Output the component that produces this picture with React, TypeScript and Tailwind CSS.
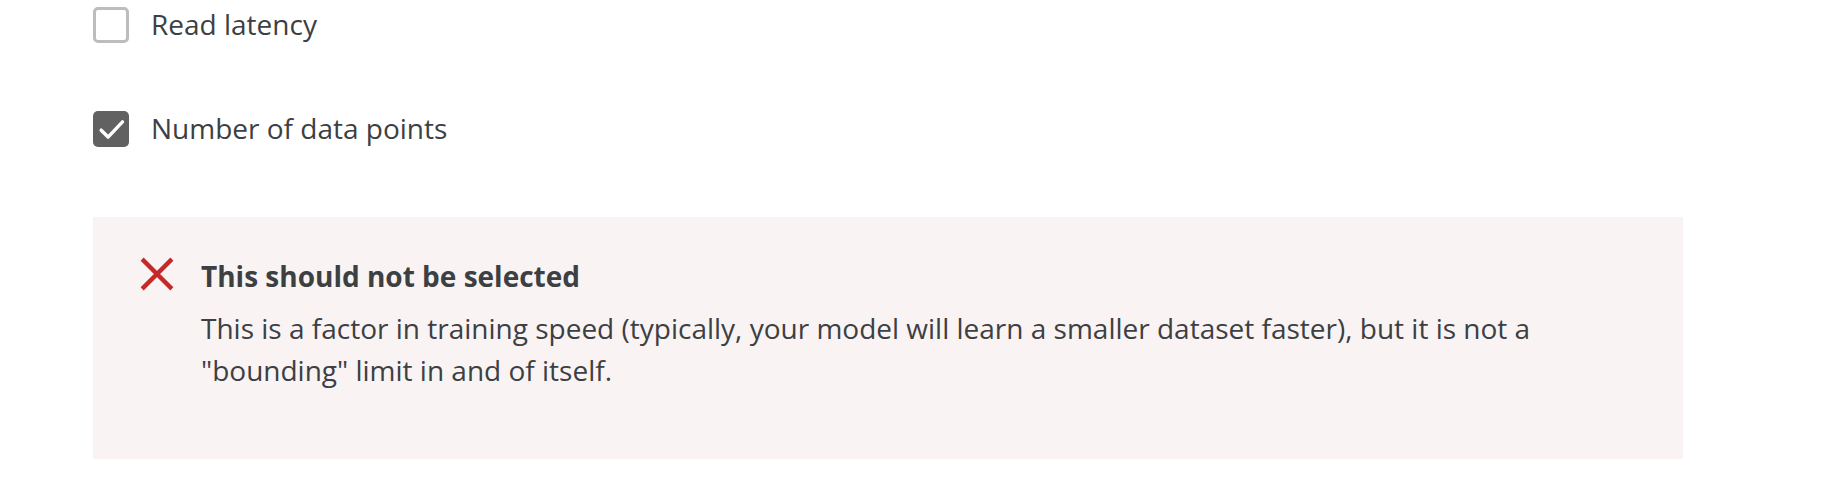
import React, { useState } from 'react';

const Checkbox = ({ checked, label, onToggle }: { checked: boolean; label: string; onToggle: () => void }) => (
  <label className="flex items-center h-[36px] cursor-pointer" onClick={onToggle}>
    <span
      className={`flex items-center justify-center w-[36px] h-[36px] rounded-[5px] ${
        checked ? 'bg-[#616161]' : 'border-[3px] border-[#bdbdbd] bg-white'
      }`}
    >
      {checked && (
        <svg viewBox="0 0 24 24" className="w-[33px] h-[33px]" fill="none" stroke="white" strokeWidth="2.5" strokeLinecap="round" strokeLinejoin="round">
          <path d="M4.5 12.5l5 5 10.5-11" />
        </svg>
      )}
    </span>
    <span className="ml-[22px] text-[28px] text-[#3c4043] -mt-[2px]">{label}</span>
  </label>
);

const App = () => {
  const [readLatency, setReadLatency] = useState(false);
  const [dataPoints, setDataPoints] = useState(true);

  return (
    <div className="w-[1822px] h-[504px] bg-white font-['Open_Sans',sans-serif] pl-[93px] pt-[7px]">
      <div className="flex flex-col gap-[68px]">
        <Checkbox checked={readLatency} label="Read latency" onToggle={() => setReadLatency(!readLatency)} />
        <Checkbox checked={dataPoints} label="Number of data points" onToggle={() => setDataPoints(!dataPoints)} />
      </div>

      <div className="mt-[70px] w-[1590px] h-[242px] bg-[#f9f3f3] pl-[47px] pr-[47px] pt-[40px] flex">
        <svg viewBox="0 0 32 32" className="w-[34px] h-[34px] shrink-0" stroke="#c62828" strokeWidth="4">
          <path d="M2 2l28 28M30 2L2 30" />
        </svg>
        <div className="ml-[27px] text-[#3c4043]">
          <div className="text-[28px] font-bold leading-[38px]">This should not be selected</div>
          <p className="mt-[12px] text-[28px] leading-[42px]">
            This is a factor in training speed (typically, your model will learn a smaller dataset faster), but it is not a "bounding" limit in and of itself.
          </p>
        </div>
      </div>
    </div>
  );
};

export default App;
